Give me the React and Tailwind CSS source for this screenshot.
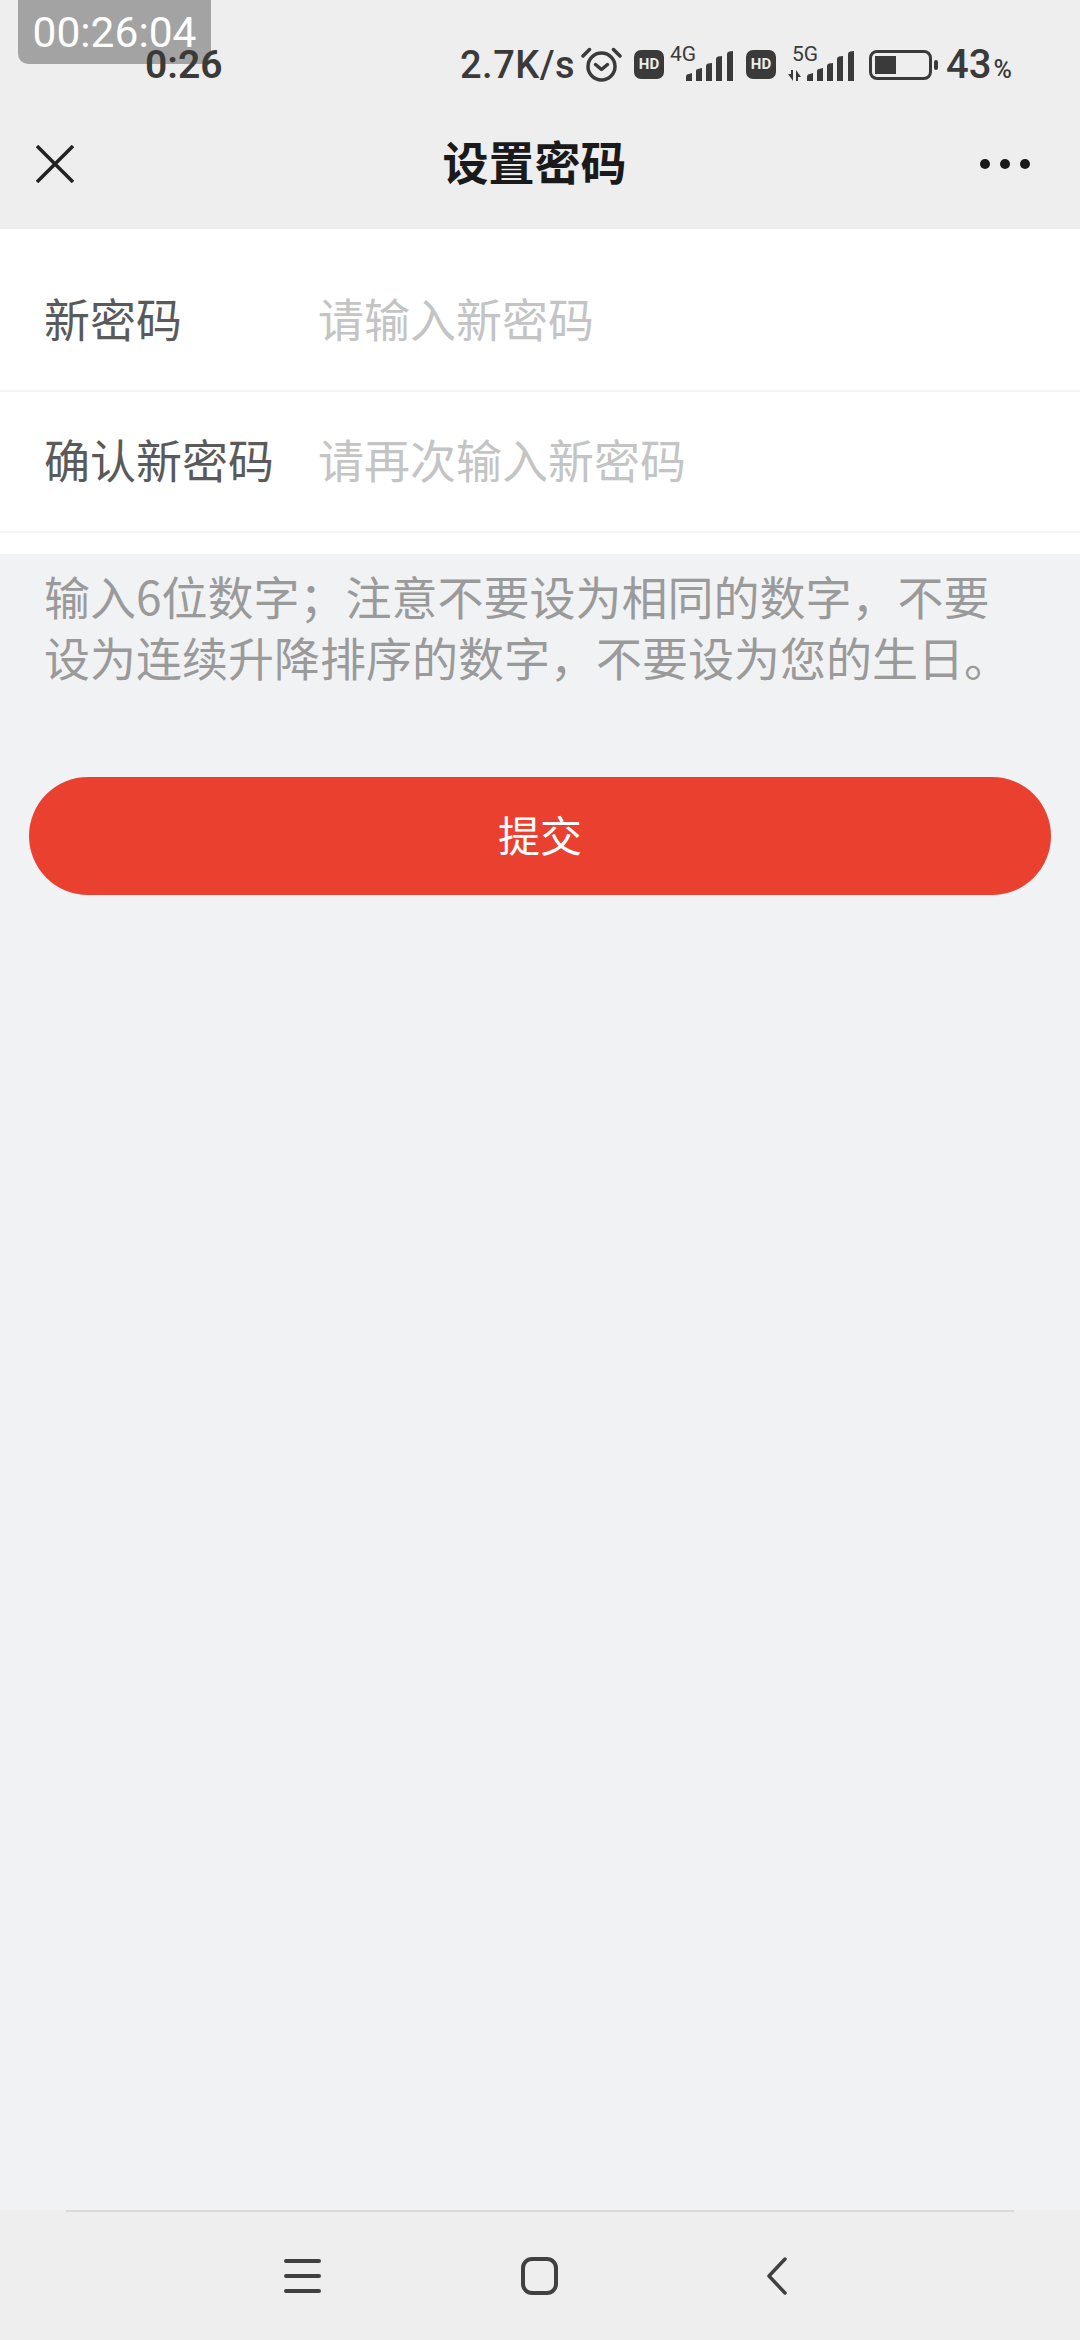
import React from "react";

const cjk = "font-['Noto_Sans_CJK_SC','Noto_Sans',sans-serif]";

// five slanted bars, used for both sim slots
const SignalBars = () => (
  <svg width="48" height="30" viewBox="0 0 48 30" fill="#3a3a3a">
    <path d="M0 30V26Q0 23 3 23L6 22V30Z" />
    <path d="M10 30V20Q10 18 12 18L16 17V30Z" />
    <path d="M20 30V15Q20 13 22 12.500L26 12V30Z" />
    <path d="M30 30V8Q30 6 32 5.500L36 5V30Z" />
    <path d="M41 30V3Q41 1 43 0.500L47 0V30Z" />
  </svg>
);

const HdBadge = () => (
  <div className="flex h-[29px] w-[30px] items-center justify-center rounded-[7px] bg-[#3a3a3a] font-['Roboto',sans-serif] text-[15px] leading-none font-bold text-[#eeeeee]">
    HD
  </div>
);

const AlarmIcon = () => (
  <svg width="41" height="36" viewBox="0 0 41 36" fill="none" stroke="#3a3a3a" strokeLinecap="round">
    <circle cx="20.500" cy="20.500" r="13.500" strokeWidth="3.500" />
    <path d="M14.500 18.500L20.500 23.500L26.500 18.500" strokeWidth="3.500" strokeLinejoin="round" />
    <path d="M2 10L8.500 3.500" strokeWidth="3.500" />
    <path d="M32.500 3.500L39 10" strokeWidth="3.500" />
  </svg>
);

const StatusBar = () => (
  <div className="relative z-10 flex h-[91px] items-end pb-[3px] pl-[145px] font-['Roboto',sans-serif] text-[#3a3a3a]">
    <span className="w-[315px] text-[39px] leading-[46px] font-semibold">0:26</span>
    <span className="w-[121px] text-[38px] leading-[46px] font-medium tracking-[0.5px]">2.7K/s</span>
    <div className="mb-[6px]">
      <AlarmIcon />
    </div>
    <div className="ml-3 mb-[9px]">
      <HdBadge />
    </div>
    <div className="relative ml-[22px] mb-[7px]">
      <span className="absolute top-[-9px] left-[-16px] text-[21px] leading-[24px]">4G</span>
      <SignalBars />
    </div>
    <div className="ml-3 mb-[9px]">
      <HdBadge />
    </div>
    <div className="relative ml-[31px] mb-[7px]">
      <span className="absolute top-[-9px] left-[-15px] text-[21px] leading-[24px]">5G</span>
      <svg className="absolute bottom-0 left-[-19px]" width="13" height="11" viewBox="0 0 13 11" fill="#3a3a3a">
        <path d="M0 4H3V0H5V11Z" />
        <path d="M8 0V11H10V7H13Z" />
      </svg>
      <SignalBars />
    </div>
    <div className="ml-[14px] mb-[8px] flex items-center">
      <div className="h-[30px] w-[63px] rounded-[8px] border-[3px] border-[#3a3a3a] p-[3px]">
        <div className="h-full w-[21px] bg-[#3a3a3a]" />
      </div>
      <div className="ml-[2px] h-[10px] w-[4px] rounded-[2px] bg-[#3a3a3a]" />
    </div>
    <span className="ml-2 text-[40px] leading-[46px] font-medium">43</span>
    <span className="ml-[2px] mb-[4px] text-[25px] leading-[28px] font-medium">%</span>
  </div>
);

const Field = ({ label, placeholder, height }) => (
  <label className={`flex items-center border-b-2 border-[#f5f5f5] pl-[44px] ${height}`}>
    <span className="w-[274px] text-[#5a5a5a]">{label}</span>
    <input
      type="password"
      placeholder={placeholder}
      className={`flex-1 bg-transparent outline-none placeholder:text-[#c4c4c4] ${cjk}`}
    />
  </label>
);

const App = () => {
  return (
    <div className={`relative flex h-[2340px] flex-col bg-[#f1f2f4] ${cjk}`}>
      <div className="absolute top-0 left-[18px] flex h-[64px] w-[193px] items-start justify-center rounded-b-[10px] bg-[#a3a3a3] pt-[9px] font-['Roboto',sans-serif] text-[42.5px] leading-[48px] text-white">
        00:26:04
      </div>

      <header className="h-[229px] bg-[#eeeeee]">
        <StatusBar />
        <div className="flex h-[138px] items-center justify-between pr-[50px] pl-[36px]">
          <svg className="mt-[8px]" width="38" height="38" viewBox="0 0 38 38" stroke="#222222" strokeWidth="3.500">
            <path d="M1 1L37 37M37 1L1 37" />
          </svg>
          <h1 className="ml-[15px] text-[46px] leading-none font-bold text-[#1a1a1a]">设置密码</h1>
          <div className="mt-[8px] flex gap-[10px]">
            <div className="h-[10px] w-[10px] rounded-full bg-[#1a1a1a]" />
            <div className="h-[10px] w-[10px] rounded-full bg-[#1a1a1a]" />
            <div className="h-[10px] w-[10px] rounded-full bg-[#1a1a1a]" />
          </div>
        </div>
      </header>

      <form className="h-[325px] bg-white text-[46px]">
        <Field label="新密码" placeholder="请输入新密码" height="h-[163px] pt-[16px]" />
        <Field label="确认新密码" placeholder="请再次输入新密码" height="h-[141px] pb-[6px]" />
      </form>

      <p className="mt-[11px] pl-[44px] text-[46px] leading-[61px] text-[#9a9a9a]">
        输入6位数字；注意不要设为相同的数字，不要
        <br />
        设为连续升降排序的数字，不要设为您的生日。
      </p>

      <button className="mx-[29px] mt-[90px] h-[118px] rounded-full bg-[#ea402f] pb-[5px] text-[42px] text-white">
        提交
      </button>

      <nav className="mt-auto flex h-[130px] justify-center bg-[#eeeeee]">
        <div className="relative flex w-[948px] items-center border-t-2 border-[#d9d9d9]">
          <div className="ml-[218px] flex w-[37px] flex-col gap-[11px]">
            <div className="h-[4px] rounded-full bg-[#404040]" />
            <div className="h-[4px] rounded-full bg-[#404040]" />
            <div className="h-[4px] rounded-full bg-[#404040]" />
          </div>
          <div className="ml-[200px] h-[38px] w-[37px] rounded-[11px] border-[4px] border-[#404040]" />
          <svg className="ml-[209px]" width="20" height="38" viewBox="0 0 20 38" fill="none" stroke="#404040" strokeWidth="3.500" strokeLinecap="round" strokeLinejoin="round">
            <path d="M18 2L2 19L18 36" />
          </svg>
        </div>
      </nav>
    </div>
  );
};

export default App;
